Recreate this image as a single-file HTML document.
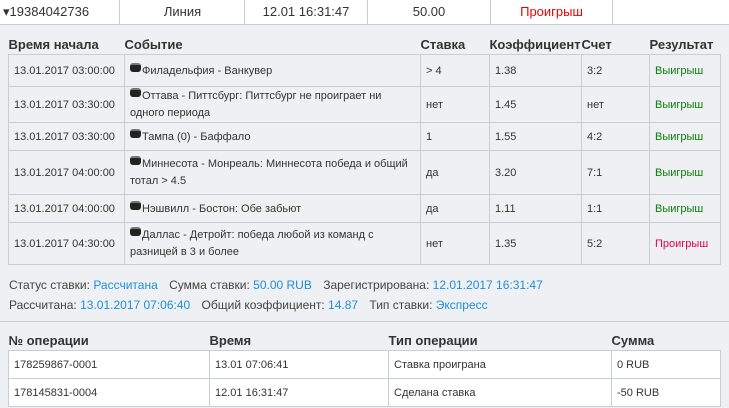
<!DOCTYPE html><html><head><meta charset="utf-8"><style>
body{margin:0;width:729px;height:408px;overflow:hidden;background:#eef0f3;font-family:"Liberation Sans",sans-serif;color:#333}
.top{position:absolute;left:0;top:0;width:729px;height:24px;background:#fff;border-bottom:1px solid #c8ced6;font-size:13px}
.top div{position:absolute;top:0;height:24px;line-height:24px;text-align:center;border-right:1px solid #c8ced6}
table{position:absolute;border-collapse:collapse;font-size:11px;table-layout:fixed}
td{border:1px solid #c8ced6;padding:1px 5px 0;vertical-align:middle;line-height:17px;overflow:hidden}
th{font-size:13px;text-align:left;font-weight:bold;padding:0 0 2px 0;color:#333;height:16px;white-space:nowrap;overflow:visible}
.g{color:#0a7d0a}.r{color:#e0004a}.b{color:#1e8fd6}
.nw{white-space:nowrap}
.puck{display:inline-block;width:11px;height:9px;background:#222;border-radius:3px;border-top:2px solid #777;vertical-align:2px;margin-right:1px;box-sizing:border-box}
.info{position:absolute;left:9px;font-size:12px;color:#444}
.info span{margin-right:8px}
</style></head><body>
<div class="top">
<div style="left:0;width:120px;text-align:left;padding-left:3px;box-sizing:border-box">▾19384042736</div>
<div style="left:121px;width:123px">Линия</div>
<div style="left:245px;width:122px">12.01 16:31:47</div>
<div style="left:368px;width:122px">50.00</div>
<div style="left:491px;width:121px;color:#e00">Проигрыш</div>
</div>
<table style="left:8px;top:36px;width:712px">
<colgroup><col style="width:116px"><col style="width:296px"><col style="width:69px"><col style="width:92px"><col style="width:68px"><col style="width:71px"></colgroup>
<tr><th>Время начала</th><th>Событие</th><th>Ставка</th><th>Коэффициент</th><th>Счет</th><th>Результат</th></tr>
<tr style="height:32px"><td class="nw">13.01.2017 03:00:00</td><td><i class="puck"></i>Филадельфия - Ванкувер</td><td>&gt; 4</td><td>1.38</td><td>3:2</td><td class="g">Выигрыш</td></tr>
<tr style="height:36px"><td class="nw">13.01.2017 03:30:00</td><td><i class="puck"></i>Оттава - Питтсбург: Питтсбург не проиграет ни одного периода</td><td>нет</td><td>1.45</td><td>нет</td><td class="g">Выигрыш</td></tr>
<tr style="height:28px"><td class="nw">13.01.2017 03:30:00</td><td><i class="puck"></i>Тампа (0) - Баффало</td><td>1</td><td>1.55</td><td>4:2</td><td class="g">Выигрыш</td></tr>
<tr style="height:44px"><td class="nw">13.01.2017 04:00:00</td><td><i class="puck"></i>Миннесота - Монреаль: Миннесота победа и общий тотал &gt; 4.5</td><td>да</td><td>3.20</td><td>7:1</td><td class="g">Выигрыш</td></tr>
<tr style="height:28px"><td class="nw">13.01.2017 04:00:00</td><td><i class="puck"></i>Нэшвилл - Бостон: Обе забьют</td><td>да</td><td>1.11</td><td>1:1</td><td class="g">Выигрыш</td></tr>
<tr style="height:42px"><td class="nw">13.01.2017 04:30:00</td><td><i class="puck"></i>Даллас - Детройт: победа любой из команд с разницей в 3 и более</td><td>нет</td><td>1.35</td><td>5:2</td><td class="r">Проигрыш</td></tr>
</table>
<div class="info" style="top:278px">Статус ставки: <span class="b">Рассчитана</span> Сумма ставки: <span class="b">50.00 RUB</span> Зарегистрирована: <span class="b">12.01.2017 16:31:47</span></div>
<div class="info" style="top:298px">Рассчитана: <span class="b">13.01.2017 07:06:40</span> Общий коэффициент: <span class="b">14.87</span> Тип ставки: <span class="b">Экспресс</span></div>
<div style="position:absolute;left:0;top:321px;width:729px;height:1px;background:#c8ced6"></div>
<table style="left:8px;top:332px;width:712px">
<colgroup><col style="width:201px"><col style="width:179px"><col style="width:223px"><col style="width:109px"></colgroup>
<tr><th>№ операции</th><th>Время</th><th>Тип операции</th><th>Сумма</th></tr>
<tr style="height:28px;background:#fff"><td>178259867-0001</td><td>13.01 07:06:41</td><td>Ставка проиграна</td><td>0 RUB</td></tr>
<tr style="height:28px;background:#fff"><td>178145831-0004</td><td>12.01 16:31:47</td><td>Сделана ставка</td><td>-50 RUB</td></tr>
</table>
</body></html>
